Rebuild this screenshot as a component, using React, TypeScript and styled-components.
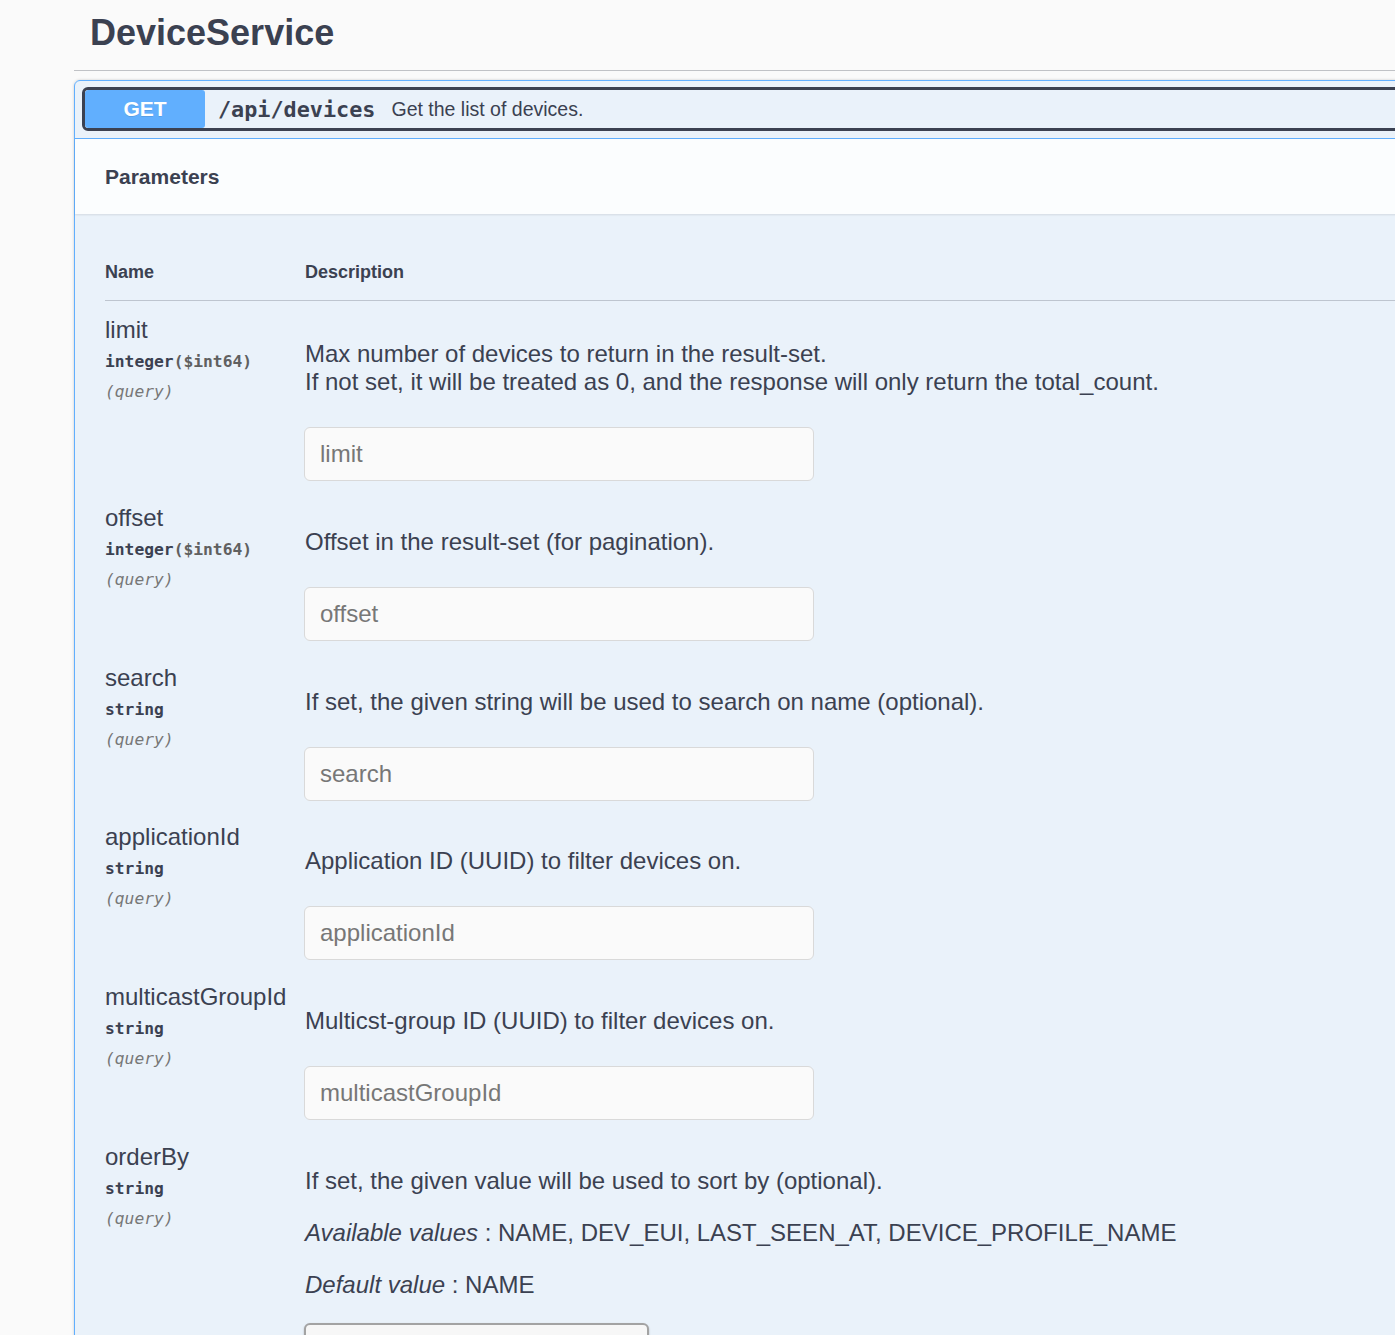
import React from 'react';
import styled, { createGlobalStyle } from 'styled-components';

const GlobalStyle = createGlobalStyle`
  html, body {
    margin: 0;
    padding: 0;
    background: #fafafa;
    overflow: hidden;
  }
  body {
    font-family: "Liberation Sans", Arial, sans-serif;
    color: #3b4151;
  }
`;

const Page = styled.div`
  padding-left: 74px;
  width: 1440px;
`;

const TagHeading = styled.h3`
  margin: 0;
  padding: 12px 0 16px 16px;
  font-size: 36px;
  line-height: 42px;
  font-weight: 700;
  color: #3b4151;
  border-bottom: 1px solid rgba(59, 65, 81, 0.3);
`;

const OpBlock = styled.div`
  margin-top: 9px;
  border: 1px solid #61affe;
  border-radius: 6px;
  background: rgba(97, 175, 254, 0.1);
  box-shadow: 0 0 3px rgba(0, 0, 0, 0.19);
  min-height: 1400px;
`;

const SummaryBar = styled.div`
  padding: 6px 0 7px 7px;
  border-bottom: 1px solid #61affe;
`;

const SummaryControl = styled.div`
  display: flex;
  align-items: center;
  border: 3px solid #3b4151;
  border-radius: 6px;
  height: 38px;
  overflow: hidden;
`;

const Method = styled.span`
  flex: 0 0 120px;
  height: 38px;
  display: flex;
  align-items: center;
  justify-content: center;
  background: #61affe;
  color: #fff;
  font-size: 21px;
  font-weight: 700;
  border-radius: 3px;
  text-shadow: 0 1px 0 rgba(0, 0, 0, 0.1);
`;

const Path = styled.span`
  margin-left: 13px;
  font-family: "DejaVu Sans Mono", monospace;
  font-weight: 700;
  font-size: 21.8px;
  color: #3b4151;
`;

const Summary = styled.span`
  margin-left: 16px;
  font-size: 19.5px;
  color: #3b4151;
`;

const SectionHeader = styled.div`
  height: 75px;
  display: flex;
  align-items: center;
  padding: 0 30px;
  background: rgba(255, 255, 255, 0.8);
  box-shadow: 0 1px 2px rgba(0, 0, 0, 0.1);
`;

const SectionTitle = styled.h4`
  margin: 0;
  font-size: 21px;
  font-weight: 700;
  color: #3b4151;
`;

const TableWrap = styled.div`
  padding: 30px 0 0 30px;
`;

const Row = styled.div<{ $head?: boolean }>`
  display: grid;
  grid-template-columns: 200px 1fr;
  padding-top: ${p => (p.$head ? '18px' : '15px')};
  padding-bottom: ${p => (p.$head ? '18px' : '0')};
  border-bottom: ${p => (p.$head ? '1px solid rgba(59, 65, 81, 0.25)' : 'none')};
`;

const HeadCell = styled.div`
  font-size: 18px;
  line-height: 20px;
  font-weight: 700;
  color: #3b4151;
`;

const NameCell = styled.div`
  display: flex;
  flex-direction: column;
  align-items: flex-start;
`;

const ParamName = styled.div`
  font-size: 24px;
  line-height: 28px;
  color: #3b4151;
`;

const ParamType = styled.div`
  margin-top: 8px;
  font-family: "DejaVu Sans Mono", monospace;
  font-size: 16.3px;
  line-height: 20px;
  font-weight: 700;
  color: #3b4151;
`;

const Format = styled.span`
  color: #606060;
`;

const ParamIn = styled.div`
  margin-top: 10px;
  font-family: "DejaVu Sans Mono", monospace;
  font-size: 16.3px;
  line-height: 20px;
  font-style: italic;
  color: #777;
`;

const DescCell = styled.div`
  display: flex;
  flex-direction: column;
  align-items: flex-start;
`;

const Para = styled.p`
  margin: 24px 0 0;
  font-size: 24px;
  line-height: 28px;
  color: #3b4151;
`;

const Em = styled.i`
  font-style: italic;
`;

const TextInput = styled.input`
  box-sizing: border-box;
  width: 510px;
  height: 54px;
  margin: 31px 0 7.75px -1px;
  padding: 0 15px;
  border: 1px solid #d9d9d9;
  border-radius: 6px;
  background: #fafafa;
  font-family: "Liberation Sans", Arial, sans-serif;
  font-size: 24px;
  color: #3b4151;
  outline: none;
  &::placeholder {
    color: #777;
  }
`;

const Select = styled.select`
  box-sizing: border-box;
  width: 345px;
  height: 52px;
  margin: 24px 0 8px -1px;
  padding: 0 15px;
  border: 2px solid #a3a3a3;
  border-radius: 6px;
  background: #f7f7f7;
  box-shadow: 0 1px 2px rgba(0, 0, 0, 0.25);
  font-family: "Liberation Sans", Arial, sans-serif;
  font-size: 21px;
  font-weight: 700;
  color: #3b4151;
  appearance: none;
`;

type Param = {
  name: string;
  type: string;
  format?: string;
  desc: React.ReactNode;
};

const params: Param[] = [
  {
    name: 'limit',
    type: 'integer',
    format: '($int64)',
    desc: (
      <>
        Max number of devices to return in the result-set.
        <br />
        If not set, it will be treated as 0, and the response will only return the total_count.
      </>
    ),
  },
  { name: 'offset', type: 'integer', format: '($int64)', desc: 'Offset in the result-set (for pagination).' },
  { name: 'search', type: 'string', desc: 'If set, the given string will be used to search on name (optional).' },
  { name: 'applicationId', type: 'string', desc: 'Application ID (UUID) to filter devices on.' },
  { name: 'multicastGroupId', type: 'string', desc: 'Multicst-group ID (UUID) to filter devices on.' },
];

const NameColumn: React.FC<{ p: Param }> = ({ p }) => (
  <NameCell>
    <ParamName>{p.name}</ParamName>
    <ParamType>
      {p.type}
      {p.format && <Format>{p.format}</Format>}
    </ParamType>
    <ParamIn>(query)</ParamIn>
  </NameCell>
);

const App: React.FC = () => (
  <>
    <GlobalStyle />
    <Page>
      <TagHeading>DeviceService</TagHeading>
      <OpBlock>
        <SummaryBar>
          <SummaryControl>
            <Method>GET</Method>
            <Path>/api/devices</Path>
            <Summary>Get the list of devices.</Summary>
          </SummaryControl>
        </SummaryBar>
        <SectionHeader>
          <SectionTitle>Parameters</SectionTitle>
        </SectionHeader>
        <TableWrap>
          <Row $head>
            <HeadCell>Name</HeadCell>
            <HeadCell>Description</HeadCell>
          </Row>
          {params.map(p => (
            <Row key={p.name}>
              <NameColumn p={p} />
              <DescCell>
                <Para>{p.desc}</Para>
                <TextInput placeholder={p.name} />
              </DescCell>
            </Row>
          ))}
          <Row>
            <NameColumn p={{ name: 'orderBy', type: 'string', desc: '' }} />
            <DescCell>
              <Para>If set, the given value will be used to sort by (optional).</Para>
              <Para>
                <Em>Available values</Em> : NAME, DEV_EUI, LAST_SEEN_AT, DEVICE_PROFILE_NAME
              </Para>
              <Para>
                <Em>Default value</Em> : NAME
              </Para>
              <Select defaultValue="NAME">
                <option>NAME</option>
                <option>DEV_EUI</option>
                <option>LAST_SEEN_AT</option>
                <option>DEVICE_PROFILE_NAME</option>
              </Select>
            </DescCell>
          </Row>
        </TableWrap>
      </OpBlock>
    </Page>
  </>
);

export default App;
